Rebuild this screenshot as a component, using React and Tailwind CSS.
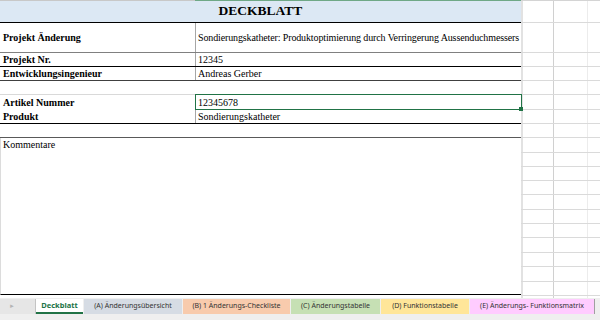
import React from "react";

const serif = { fontFamily: '"Liberation Serif", "Times New Roman", serif' };
const ui = { fontFamily: '"Noto Sans", "Open Sans", sans-serif' };

// Zeilen des rechten Rasters (Höhe inkl. unterer Linie)
const gridRows = [22, 30, 14, 14, 14, 15, 14, 14, 15, 14, 14, 14, 15, 14, 14, 15, 14, 15, 14];

const tabs = [
    { label: "(A) Änderungsübersicht", w: "w-[99px]", bg: "bg-[#d6dce4]" },
    { label: "(B) 1 Änderungs-Checkliste", w: "w-[108px]", bg: "bg-[#f8cbad]" },
    { label: "(C) Änderungstabelle", w: "w-[90px]", bg: "bg-[#c6e0b4]" },
    { label: "(D) Funktionstabelle", w: "w-[89px]", bg: "bg-[#ffe699]" },
    { label: "(E) Änderungs- Funktionsmatrix", w: "w-[125px]", bg: "bg-[#ffccff]" },
];

function Row({ h, line, label, value, tight = false }) {
    return (
        <div className={`flex ${h} border-b ${line}`}>
            <div className="flex w-[196px] shrink-0 items-center border-r border-[#a6a6a6] pl-[3px] font-bold">
                {label}
            </div>
            <div
                className={`flex min-w-0 flex-1 items-center overflow-hidden whitespace-nowrap pl-[2px] ${
                    tight ? "tracking-[-0.13px]" : ""
                }`}
            >
                {value}
            </div>
        </div>
    );
}

export default function App() {
    return (
        <div className="flex h-[320px] w-[600px] flex-col overflow-hidden bg-white">
            <div className="relative flex h-[298px]" style={serif}>
                {/* Deckblatt */}
                <div className="flex w-[521px] shrink-0 flex-col text-[10px] text-black">
                    <div className="flex h-px">
                        <div className="w-[195px] bg-[#c8c8c8]"></div>
                        <div className="flex-1 bg-[#6fa886]"></div>
                    </div>
                    <div className="flex h-[22px] items-center justify-center border-b border-black bg-[#dce8f4] text-[13.5px] font-bold">
                        DECKBLATT
                    </div>
                    <Row
                        h="h-[30px]"
                        line="border-[#808080]"
                        label="Projekt Änderung"
                        value="Sondierungskatheter: Produktoptimierung durch Verringerung Aussenduchmessers"
                        tight
                    />
                    <Row h="h-[14px]" line="border-black" label="Projekt Nr." value="12345" />
                    <Row
                        h="h-[14px]"
                        line="border-[#404040]"
                        label="Entwicklungsingenieur"
                        value="Andreas Gerber"
                    />
                    <div className="h-[14px] border-b border-[#d9d9d9]"></div>
                    <Row h="h-[15px] border-b-0" line="" label="Artikel Nummer" value="12345678" />
                    <Row h="h-[14px]" line="border-black" label="Produkt" value="Sondierungskatheter" />
                    <div className="h-[14px] border-b border-[#595959]"></div>
                    <div className="h-[157px] border-b border-l border-b-black border-l-[#dcdcdc] pl-[2px] pt-px leading-[12px]">
                        Kommentare
                    </div>
                </div>

                {/* leere Zellen rechts */}
                <div className="flex flex-1 flex-col">
                    <div className="h-px bg-[#d4d4d4]"></div>
                    {gridRows.map((h, i) => (
                        <div
                            key={i}
                            className="flex border-b border-[#dadada]"
                            style={{ height: h }}
                        >
                            <div className="w-[33px] border-l-2 border-r border-l-[#e2e2e2] border-r-[#d0d0d0]"></div>
                            <div className="w-[34px] border-r border-[#ececec]"></div>
                            <div className="flex-1"></div>
                        </div>
                    ))}
                    <div className="flex flex-1">
                        <div className="w-[33px] border-l-2 border-r border-l-[#e2e2e2] border-r-[#d0d0d0]"></div>
                        <div className="w-[34px] border-r border-[#ececec]"></div>
                    </div>
                </div>

                {/* Auswahl */}
                <div className="absolute left-[195px] top-[94px] h-[16px] w-[327px] border border-[#217346]"></div>
                <div className="absolute left-[519px] top-[107px] h-[4px] w-[4px] bg-[#217346]"></div>
            </div>

            {/* Blattregister */}
            <div className="flex-1 bg-[#efefef] pt-px" style={ui}>
                <div className="flex h-[15px] text-[7px] text-[#333]">
                    <div className="flex w-[36px] items-center border-r border-[#c4c4c4] bg-[#e6e6e6] pl-[9px] text-[6px] text-[#b4b4b4]">
                        ►
                    </div>
                    <div className="flex w-[47px] items-center justify-center border-b-2 border-[#217346] bg-white text-[7.5px] font-bold text-[#217346]">
                        Deckblatt
                    </div>
                    {tabs.map((t) => (
                        <div
                            key={t.label}
                            className={`flex ${t.w} ${t.bg} items-center justify-center border-l border-[#efefef] whitespace-nowrap`}
                        >
                            {t.label}
                        </div>
                    ))}
                    <div className="w-px bg-[#a0a0a0]"></div>
                </div>
            </div>
        </div>
    );
}
